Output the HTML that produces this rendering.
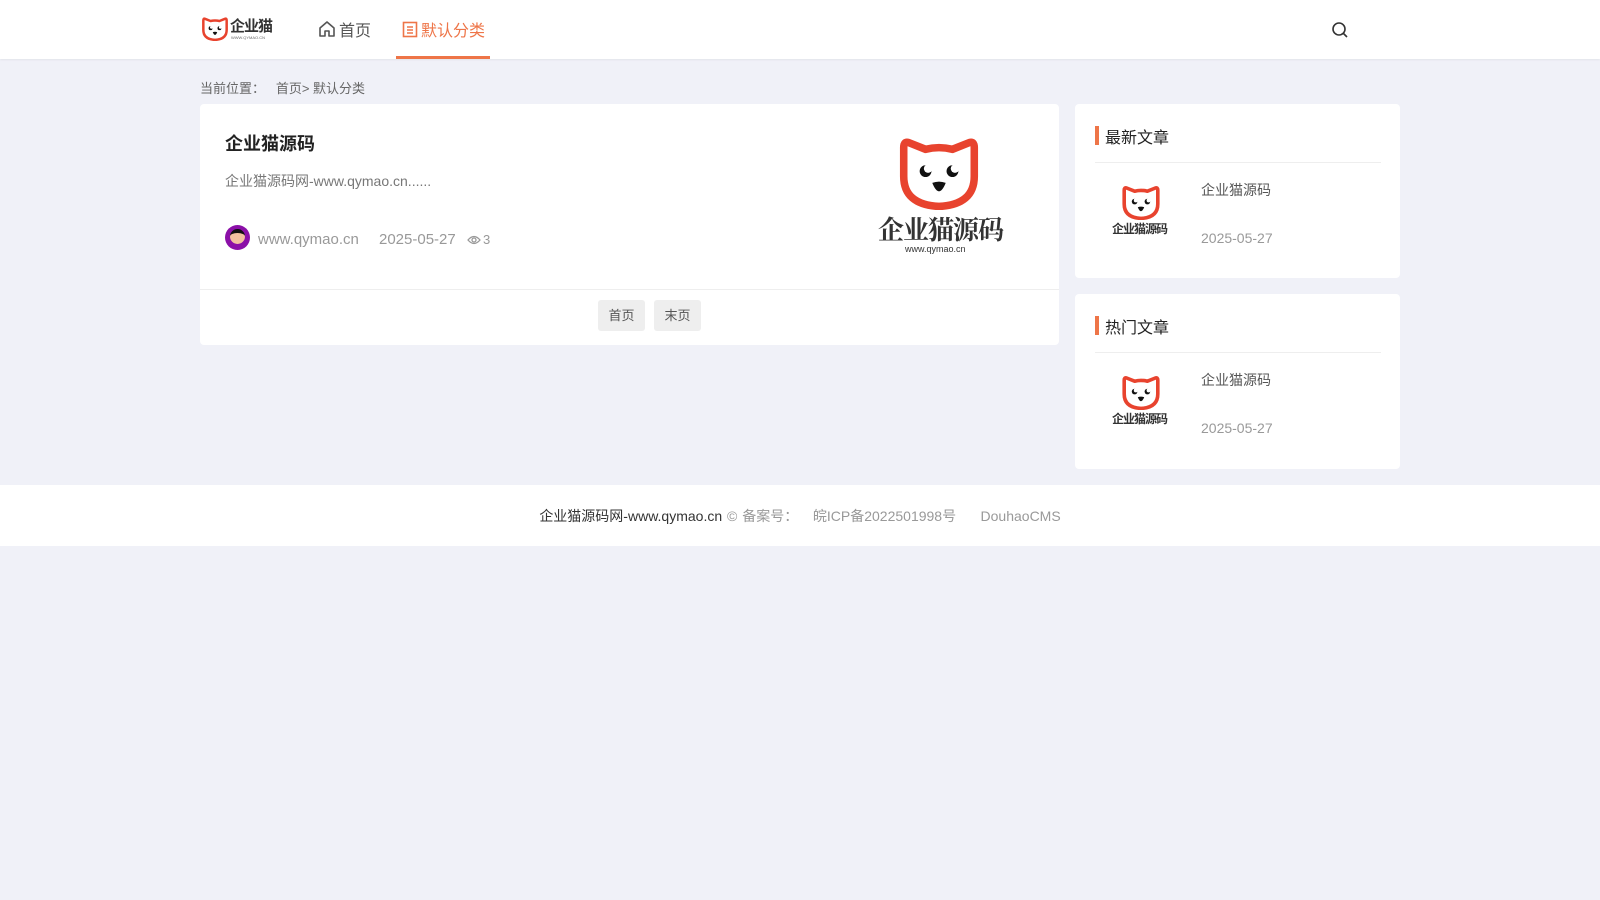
<!DOCTYPE html>
<html><head><meta charset="utf-8"><style>
*{margin:0;padding:0;box-sizing:border-box}
body{width:1600px;height:900px;background:#f0f1f8;font-family:"Liberation Sans","Noto Sans CJK SC",sans-serif;position:relative;overflow:hidden;color:#333}
.a{position:absolute}
.hdr{left:0;top:0;width:1600px;height:59px;background:#fff;box-shadow:0 1px 2px rgba(0,0,0,.06)}
.card{background:#fff;border-radius:4px}
</style></head><body>
<svg width="0" height="0" style="position:absolute"><defs>
<symbol id="cat" viewBox="0 0 100 90"><path d="M14 10 L34 18 Q50 14 66 18 L86 10 Q92 8 92 16 L92 50 Q92 84 50 86 Q8 84 8 50 L8 16 Q8 8 14 10Z" fill="none" stroke="#e8432e" stroke-width="9" stroke-linejoin="round"/><circle cx="34" cy="44" r="7" fill="#111"/><circle cx="37" cy="41" r="5" fill="#fff"/><circle cx="66" cy="44" r="7" fill="#111"/><circle cx="69" cy="41" r="5" fill="#fff"/><path d="M42 58 Q50 55 58 58 Q54 68 50 68 Q46 68 42 58Z" fill="#111"/></symbol>
</defs></svg>
<div class="a hdr"></div>
<svg class="a" style="left:201px;top:16px" width="28" height="25"><use href="#cat"/></svg>
<div class="a" style="left:230px;top:15px;font-size:15px;font-weight:bold;color:#333;letter-spacing:-1px">企业猫</div>
<div class="a" style="left:231px;top:35px;font-size:4px;color:#666">WWW.QYMAO.CN</div>
<svg class="a" style="left:318px;top:20px" width="18" height="18" viewBox="0 0 18 18"><path d="M2 8 L9 2 L16 8 V16 H11 V11 H7 V16 H2Z" fill="none" stroke="#555" stroke-width="1.6" stroke-linejoin="round"/></svg>
<div class="a" style="left:339px;top:17px;font-size:16px;color:#555">首页</div>
<svg class="a" style="left:402px;top:21px" width="16" height="17" viewBox="0 0 16 17"><rect x="1.5" y="1.5" width="13" height="14" fill="none" stroke="#ee7548" stroke-width="1.6"/><path d="M5 6h6M5 9h6M5 12h6" stroke="#ee7548" stroke-width="1.4"/></svg>
<div class="a" style="left:421px;top:17px;font-size:16px;color:#ee7548">默认分类</div>
<div class="a" style="left:396px;top:56px;width:94px;height:3px;background:#ee7548"></div>
<svg class="a" style="left:1331px;top:21px" width="18" height="18" viewBox="0 0 18 18"><circle cx="8" cy="8" r="6" fill="none" stroke="#333" stroke-width="1.6"/><path d="M12.5 12.5 L16 16" stroke="#333" stroke-width="1.6"/></svg>

<div class="a" style="left:200px;top:78px;font-size:13px;color:#666">当前位置：&nbsp;&nbsp;&nbsp;首页&gt; 默认分类</div>

<div class="a card" style="left:200px;top:104px;width:859px;height:241px"></div>
<div class="a" style="left:225px;top:130px;font-size:18px;font-weight:bold;color:#222">企业猫源码</div>
<div class="a" style="left:225px;top:171px;font-size:14px;color:#777">企业猫源码网-www.qymao.cn......</div>
<div class="a" style="left:225px;top:225px;width:25px;height:25px;border-radius:50%;background:#8b10a8;overflow:hidden"><div style="margin:4px auto 0;width:15px;height:15px;border-radius:50%;background:#f2c1a0;border-top:4px solid #111"></div></div>
<div class="a" style="left:258px;top:231px;font-size:15px;color:#999">www.qymao.cn</div>
<div class="a" style="left:379px;top:231px;font-size:15px;color:#999">2025-05-27</div>
<svg class="a" style="left:467px;top:234px" width="14" height="12" viewBox="0 0 14 12"><path d="M1 6 Q7 -1 13 6 Q7 13 1 6Z" fill="none" stroke="#999" stroke-width="1.3"/><circle cx="7" cy="6" r="2" fill="none" stroke="#999" stroke-width="1.3"/></svg>
<div class="a" style="left:483px;top:232px;font-size:13px;color:#999">3</div>
<svg class="a" style="left:897px;top:134px" width="84" height="76"><use href="#cat"/></svg>
<div class="a" style="left:878px;top:210px;font-size:26px;font-weight:bold;color:#333;font-family:'Noto Serif CJK SC',serif;letter-spacing:-1px">企业猫源码</div>
<div class="a" style="left:905px;top:244px;font-size:9px;color:#333">www.qymao.cn</div>
<div class="a" style="left:200px;top:289px;width:859px;height:1px;background:#eee"></div>
<div class="a" style="left:598px;top:300px;width:47px;height:31px;background:#eeeeee;border-radius:3px;font-size:13px;color:#555;text-align:center;line-height:31px">首页</div>
<div class="a" style="left:654px;top:300px;width:47px;height:31px;background:#eeeeee;border-radius:3px;font-size:13px;color:#555;text-align:center;line-height:31px">末页</div>

<div class="a card" style="left:1075px;top:104px;width:325px;height:174px"></div>
<div class="a" style="left:1095px;top:126px;width:4px;height:19px;background:#ee7548"></div>
<div class="a" style="left:1105px;top:124px;font-size:16px;color:#222">最新文章</div>
<div class="a" style="left:1095px;top:162px;width:286px;height:1px;background:#eee"></div>
<svg class="a" style="left:1121px;top:184px" width="40" height="36"><use href="#cat"/></svg>
<div class="a" style="left:1112px;top:220px;font-size:12px;font-weight:bold;color:#333;letter-spacing:-1px">企业猫源码</div>
<div class="a" style="left:1201px;top:180px;font-size:14px;color:#555">企业猫源码</div>
<div class="a" style="left:1201px;top:230px;font-size:14px;color:#999">2025-05-27</div>

<div class="a card" style="left:1075px;top:294px;width:325px;height:175px"></div>
<div class="a" style="left:1095px;top:316px;width:4px;height:19px;background:#ee7548"></div>
<div class="a" style="left:1105px;top:314px;font-size:16px;color:#222">热门文章</div>
<div class="a" style="left:1095px;top:352px;width:286px;height:1px;background:#eee"></div>
<svg class="a" style="left:1121px;top:374px" width="40" height="36"><use href="#cat"/></svg>
<div class="a" style="left:1112px;top:410px;font-size:12px;font-weight:bold;color:#333;letter-spacing:-1px">企业猫源码</div>
<div class="a" style="left:1201px;top:370px;font-size:14px;color:#555">企业猫源码</div>
<div class="a" style="left:1201px;top:420px;font-size:14px;color:#999">2025-05-27</div>

<div class="a" style="left:0;top:485px;width:1600px;height:61px;background:#fff"></div>
<div class="a" style="left:0;top:506px;width:1600px;text-align:center;font-size:14px;color:#999;word-spacing:1px"><span style="color:#333">企业猫源码网-www.qymao.cn</span> © 备案号：&nbsp;&nbsp;&nbsp;皖ICP备2022501998号&nbsp;&nbsp;&nbsp;&nbsp;&nbsp;DouhaoCMS</div>
</body></html>
